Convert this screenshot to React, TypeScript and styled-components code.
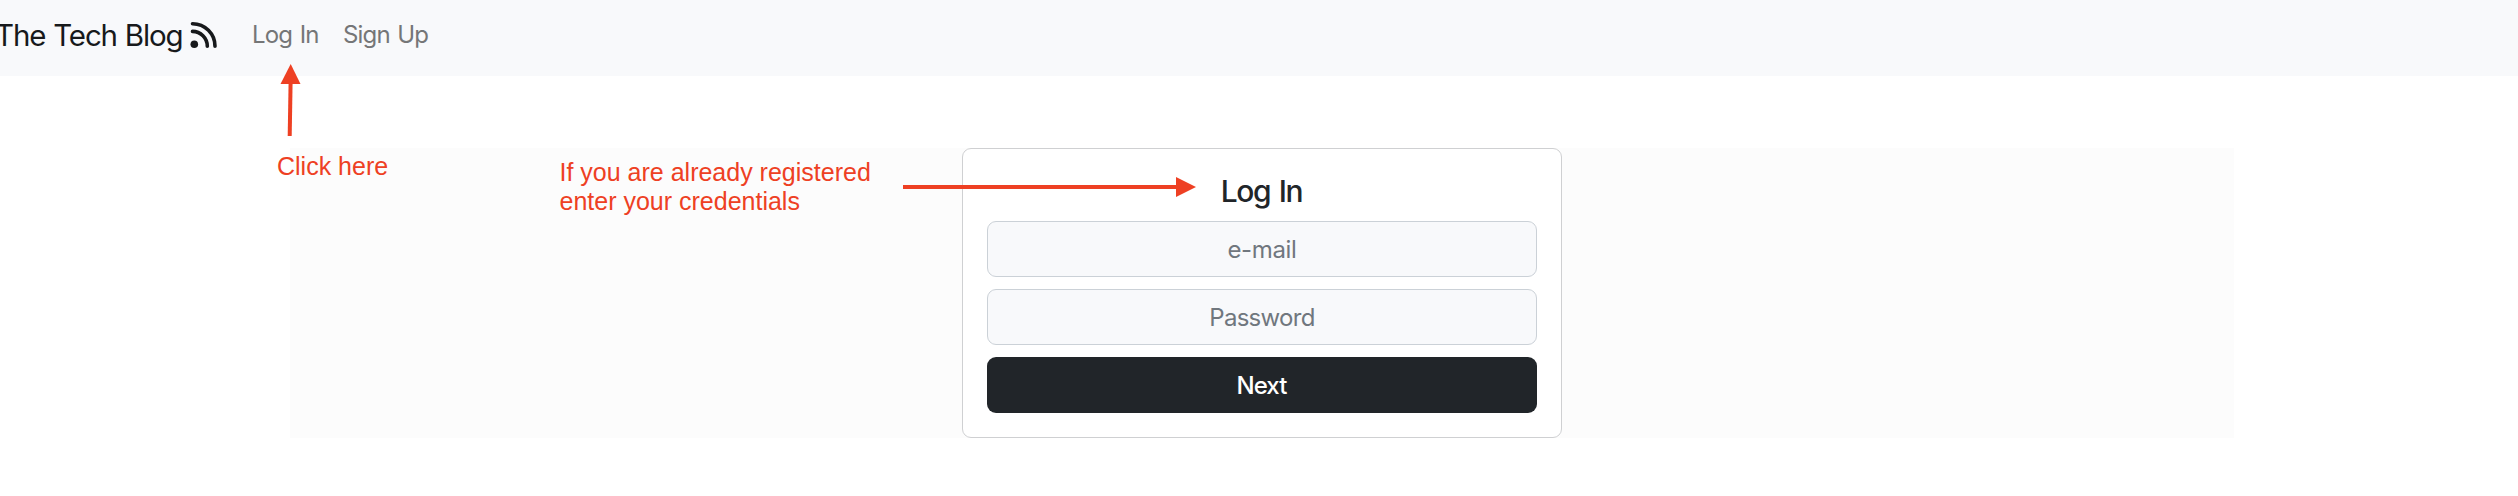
import React from "react";
import styled, { createGlobalStyle } from "styled-components";

const GlobalStyle = createGlobalStyle`
  *, *::before, *::after { box-sizing: border-box; }
  body {
    margin: 0;
    background: #fff;
    color: #212529;
    font: 400 24px/36px Inter, "Liberation Sans", sans-serif;
    overflow: hidden;
  }
`;

const Page = styled.div`
  position: relative;
  width: 2518px;
  height: 496px;
  overflow: hidden;
`;

const Navbar = styled.nav`
  display: flex;
  align-items: flex-start;
  height: 76px;
  padding-top: 17px;
  background: #f8f9fb;
`;

const Brand = styled.a`
  display: flex;
  width: 253px;
  margin-left: -5px;
  font-size: 29.5px;
  line-height: 36px;
  letter-spacing: -1.14px;
  word-spacing: 0.8px;
  white-space: nowrap;
  color: #17191b;
`;

const BrandName = styled.span`
  width: 193px;
`;

const FeedIcon = styled.svg`
  margin-top: 3px;
  width: 30px;
  height: 30px;
`;

const NavLinks = styled.div`
  display: flex;
  gap: 24px;
  padding-left: 4px;
  letter-spacing: -0.85px;
  word-spacing: 1.6px;
  white-space: nowrap;
  color: #757677;
`;

const NavLink = styled.a<{ $width: number }>`
  width: ${(p) => p.$width}px;
`;

const Panel = styled.main`
  display: flex;
  justify-content: center;
  width: 1944px;
  height: 290px;
  margin: 72px 0 0 290px;
  background: #fcfcfc;
`;

const Card = styled.form`
  display: flex;
  flex-direction: column;
  gap: 12px;
  width: 600px;
  padding: 24px;
  border: 1px solid #cfd0d2;
  border-radius: 9px;
  background: #fff;
`;

const Title = styled.h1`
  height: 36px;
  margin: 0;
  padding-right: 1px;
  font-size: 30px;
  font-weight: 500;
  line-height: 37px;
  letter-spacing: -1.4px;
  word-spacing: 2px;
  text-align: center;
`;

const Field = styled.input<{ $tracking: number }>`
  flex: 0 0 56px;
  width: 100%;
  padding: 2px 18px 0;
  border: 1px solid #cbd1d7;
  border-radius: 9px;
  outline: none;
  background: #f8f9fb;
  font: inherit;
  letter-spacing: ${(p) => p.$tracking}px;
  text-align: center;

  &::placeholder { color: #70777e; opacity: 1; }
`;

const Submit = styled.button`
  flex: 0 0 56px;
  padding: 2px 1px 0 0;
  border: 0;
  border-radius: 9px;
  background: #212529;
  color: #fff;
  font: inherit;
  font-weight: 500;
  letter-spacing: -0.9px;
`;

const Fields = styled.div`
  display: flex;
  flex-direction: column;
  gap: 12px;
`;

const Note = styled.p<{ $x: number; $y: number }>`
  position: absolute;
  left: ${(p) => p.$x}px;
  top: ${(p) => p.$y}px;
  margin: 0;
  font: 25px/29px "Liberation Sans", Arial, sans-serif;
  white-space: nowrap;
  color: #ee4023;
`;

const Arrows = styled.svg`
  position: absolute;
  inset: 0;
  pointer-events: none;
`;

export default function App() {
  return (
    <Page>
      <GlobalStyle />
      <Navbar>
        <Brand>
          <BrandName>The Tech Blog</BrandName>
          <FeedIcon viewBox="0 0 30 30" fill="none" stroke="#17191b" strokeWidth="3.6" strokeLinecap="round">
            <circle cx="6.3" cy="24.2" r="3.8" fill="#17191b" stroke="none" />
            <path d="M4.5 3.7A22.4 22.4 0 0 1 27 26.2M4.5 11.4A14.8 14.8 0 0 1 19.3 26.2" />
          </FeedIcon>
        </Brand>
        <NavLinks>
          <NavLink $width={67}>Log In</NavLink>
          <NavLink $width={88}>Sign Up</NavLink>
        </NavLinks>
      </Navbar>
      <Panel>
        <Card>
          <Title>Log In</Title>
          <Fields>
            <Field type="email" placeholder="e-mail" $tracking={-0.35} />
            <Field type="password" placeholder="Password" $tracking={-0.7} />
            <Submit type="button">Next</Submit>
          </Fields>
        </Card>
      </Panel>
      <Note $x={277} $y={152}>Click here</Note>
      <Note $x={559.5} $y={158}>
        If you are already registered
        <br />
        enter your credentials
      </Note>
      <Arrows width="2518" height="496" viewBox="0 0 2518 496" fill="#ee4023" stroke="none">
        <path d="M290.7 64L300.5 84H280.5Z" />
        <path d="M290.6 82L289.7 136" stroke="#ee4023" strokeWidth="4" />
        <path d="M903 185H1176V177L1196 187L1176 197V189H903Z" />
      </Arrows>
    </Page>
  );
}
